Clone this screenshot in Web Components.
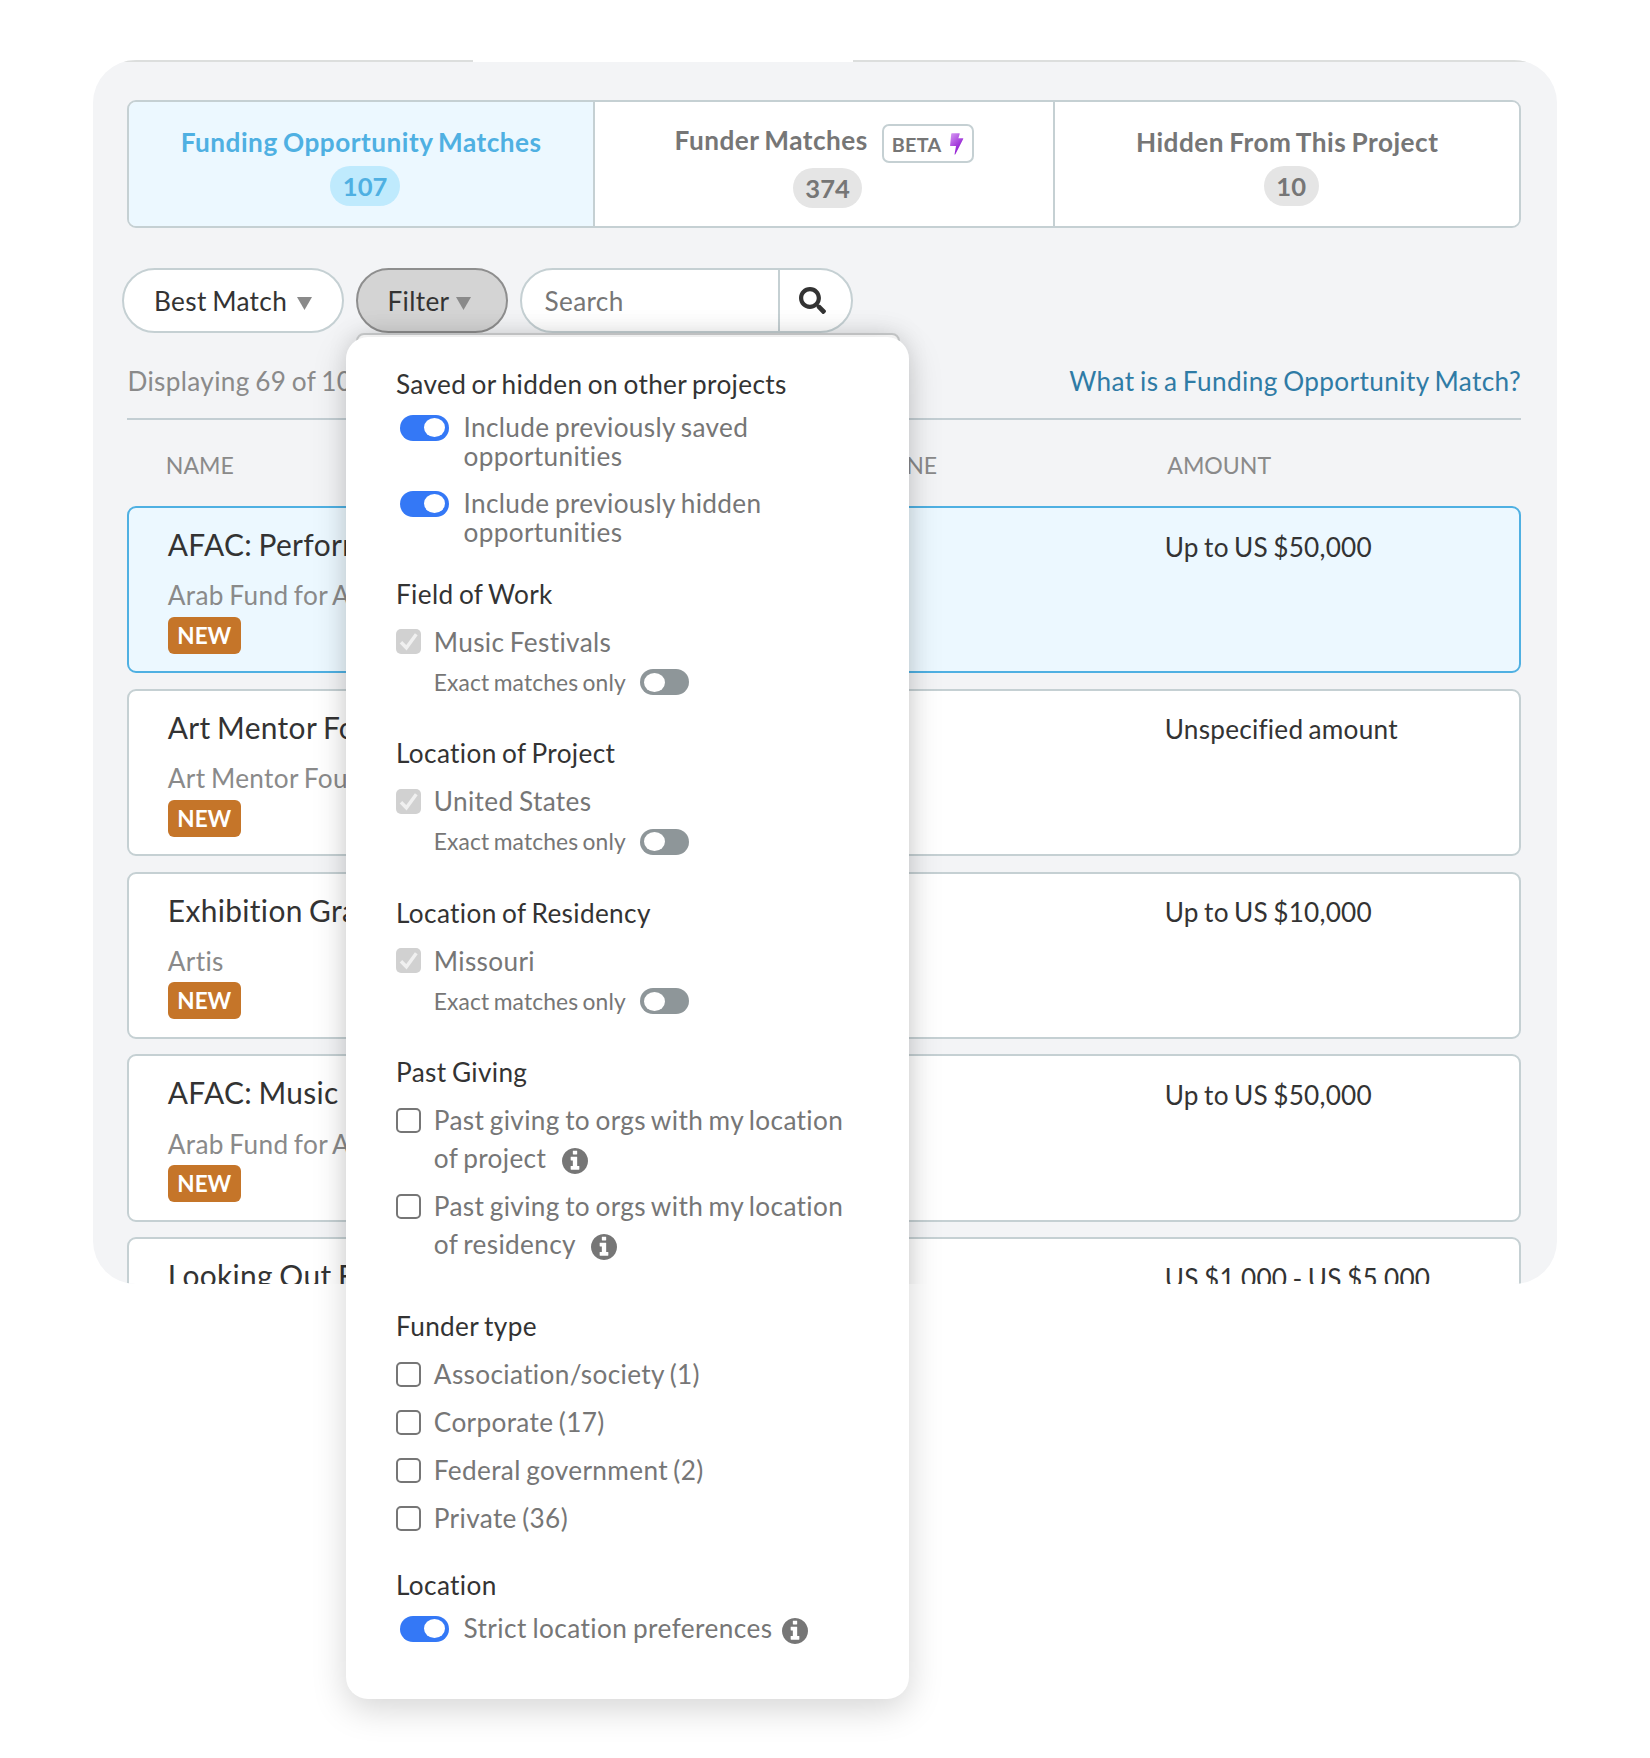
<!DOCTYPE html>
<html lang="en">
<head>
<meta charset="utf-8">
<title>Funding Opportunity Matches</title>
<style>
  body {
    margin: 0;
    background: #fff;
    color: #333;
    font: 26.2px/38px Lato, "Liberation Sans", sans-serif;
    font-variant-ligatures: none;
    letter-spacing: .35px;
    word-spacing: -1.6px;
  }
</style>
</head>
<body>
<matches-page></matches-page>

<script>
class BaseElement extends HTMLElement {
  constructor() {
    super();
    const shadow = this.attachShadow({mode: 'open'});
    shadow.innerHTML = this.template();
  }

  template() { return '<slot></slot>'; }
}

/* Small icons */
const icons = {
  search: ['0 0 512 512', '<path fill="currentColor" d="M505 442.7L405.3 343c-4.5-4.5-10.6-7-17-7H372c27.6-35.3 44-79.7 44-128C416 93.1 322.9 0 208 0S0 93.1 0 208s93.1 208 208 208c48.3 0 92.7-16.4 128-44v16.3c0 6.4 2.5 12.5 7 17l99.7 99.7c9.4 9.4 24.6 9.4 33.9 0l28.3-28.3c9.4-9.4 9.4-24.6.1-34zM208 336c-70.7 0-128-57.2-128-128 0-70.7 57.2-128 128-128 70.7 0 128 57.2 128 128 0 70.7-57.2 128-128 128z"/>'],
  info: ['0 128 1536 1536', '<path fill="currentColor" d="M1024 1376v-160q0-14-9-23t-23-9h-96v-512q0-14-9-23t-23-9h-320q-14 0-23 9t-9 23v160q0 14 9 23t23 9h96v320h-96q-14 0-23 9t-9 23v160q0 14 9 23t23 9h448q14 0 23-9t9-23zm-128-896v-160q0-14-9-23t-23-9h-192q-14 0-23 9t-9 23v160q0 14 9 23t23 9h192q14 0 23-9t9-23zm640 416q0 209-103 385.5t-279.5 279.5-385.5 103-385.5-103-279.5-279.5-103-385.5 103-385.5 279.5-279.5 385.5-103 385.5 103 279.5 279.5 103 385.5z"/>'],
  bolt: ['0 0 14 22', '<defs><linearGradient id="g" x1="0" y1="0" x2="0.6" y2="1"><stop offset="0.1" stop-color="#cf8cf0"/><stop offset="0.75" stop-color="#9a2bd6"/></linearGradient></defs><path fill="url(#g)" d="M2 .2h7.3q.6 0 .4.7L8.4 5.2h4.3q.9 0 .5.8L5.4 21.2q-.9 1-.8-.2L6 13H.7Q0 13 .1 12.2L1.2.9Q1.3.2 2 .2z"/>'],
  caret: ['0 0 15 13', '<path fill="#8a8a8a" d="M0 0h15L7.5 13z"/>'],
  check: ['0 0 25 25', '<path fill="none" stroke="#f0f0f0" stroke-width="3.4" d="M5 13.2l5.4 5.6L20.3 5.2"/>']
};

class FundIcon extends HTMLElement {
  constructor() {
    super();
    this.attachShadow({mode: 'open'});
  }

  connectedCallback() {
    const [ box, body ] = icons[this.getAttribute('name')];
    this.shadowRoot.innerHTML = `
      <style>
        :host { display: inline-block; flex: none; line-height: 0; }
        svg { display: block; width: 100%; height: 100%; }
      </style>
      <svg viewBox="${box}">${body}</svg>`;
  }
}
customElements.define('fund-icon', FundIcon);

class MatchTab extends BaseElement {
  template() {
    return `
      <style>
        :host {
          display: flex;
          flex-direction: column;
          align-items: center;
          box-sizing: border-box;
          padding-top: 20px;
          background: #fff;
          border-right: 2px solid #c5d0d3;
          color: #767676;
          font-weight: 700;
          letter-spacing: .5px;
        }
        :host(:last-of-type) { border-right: 0; }
        :host([active]) { background: #ecf8ff; color: #4fb0e2; }
        :host([beta]) { padding-top: 18px; }
        .label { display: flex; height: 40px; line-height: 41px; white-space: nowrap; }
        .count {
          margin: 4px 0 0 8px;
          padding: 0 12.5px;
          height: 40px;
          line-height: 40px;
          border-radius: 20px;
          background: #e5e5e5;
          font-size: 25.6px;
          letter-spacing: 0;
        }
        :host([beta]) .count { margin-top: 7.5px; margin-left: 7px; }
        :host([active]) .count { background: #bfeafd; }
      </style>
      <div class="label"><slot></slot></div>
      <div class="count"><slot name="count"></slot></div>`;
  }
}
customElements.define('match-tab', MatchTab);

class BetaTag extends BaseElement {
  template() {
    return `
      <style>
        :host {
          display: inline-flex;
          align-items: center;
          box-sizing: border-box;
          width: 92px;
          height: 39px;
          margin: 4px 0 0 14px;
          padding: 0 7.5px 0 8px;
          border: 2px solid #c5d0d3;
          border-radius: 7px;
          font-size: 19.8px;
          letter-spacing: .3px;
          line-height: 34px;
        }
        fund-icon { width: 14px; height: 22px; margin-left: auto; }
      </style>
      <slot></slot><fund-icon name="bolt"></fund-icon>`;
  }
}
customElements.define('beta-tag', BetaTag);

class PillButton extends BaseElement {
  template() {
    return `
      <style>
        :host {
          display: flex;
          align-items: center;
          box-sizing: border-box;
          height: 65px;
          padding-left: 30px;
          border: 2px solid #c5d0d3;
          border-radius: 33px;
          background: #fff;
          white-space: nowrap;
        }
        :host([pressed]) { background: #d4d4d4; border-color: #8e8e8e; }
        fund-icon { width: 15px; height: 13px; margin: 6px 0 0 9.5px; }
        :host([pressed]) fund-icon { margin-left: 6.5px; }
      </style>
      <slot></slot><fund-icon name="caret"></fund-icon>`;
  }
}
customElements.define('pill-button', PillButton);

class SearchBox extends BaseElement {
  template() {
    return `
      <style>
        :host {
          display: flex;
          box-sizing: border-box;
          height: 65px;
          border: 2px solid #c5d0d3;
          border-radius: 33px;
          background: #fff;
          color: #767676;
          line-height: 62.5px;
        }
        .field { width: 258px; box-sizing: border-box; padding-left: 23px; border-right: 2px solid #c5d0d3; }
        .go { flex: 1; color: #333; padding: 17px 0 0 19px; }
        fund-icon { width: 27px; height: 27px; display: block; }
      </style>
      <div class="field"><slot></slot></div>
      <div class="go"><fund-icon name="search"></fund-icon></div>`;
  }
}
customElements.define('search-box', SearchBox);

class MatchRow extends BaseElement {
  template() {
    return `
      <style>
        :host {
          display: grid;
          grid-template-columns: 655px 342px 1fr;
          box-sizing: border-box;
          height: 167.3px;
          margin-bottom: 15.5px;
          padding: 17px 0 0 38.4px;
          border: 2px solid #c5d0d3;
          border-radius: 9px;
          background: #fff;
          white-space: nowrap;
        }
        :host([active]) { background: #ecf8ff; border-color: #4fb0e2; }
        .title { font-size: 29.9px; line-height: 38px; }
        .org { color: #8a8a8a; margin-top: 15.4px; line-height: 34px; }
        .new {
          width: 73px;
          height: 37px;
          margin-top: 4.4px;
          border-radius: 6px;
          background: #c57529;
          color: #fff;
          font-size: 22.5px;
          font-weight: 700;
          letter-spacing: 0;
          line-height: 37px;
          text-align: center;
        }
        :host([seen]) .new { display: none; }
        .amount { padding-top: 2.6px; letter-spacing: .22px; }
      </style>
      <div>
        <div class="title"><slot name="title"></slot></div>
        <div class="org"><slot name="org"></slot></div>
        <div class="new">NEW</div>
      </div>
      <div></div>
      <div class="amount"><slot name="amount"></slot></div>`;
  }
}
customElements.define('match-row', MatchRow);

class ToggleSwitch extends BaseElement {
  template() {
    return `
      <style>
        :host {
          display: flex;
          flex: none;
          align-items: center;
          box-sizing: border-box;
          width: 49px;
          height: 26px;
          padding: 0 4px;
          border-radius: 13px;
          background: #8e9699;
        }
        :host([on]) { background: #3478f6; justify-content: flex-end; }
        i { width: 21px; height: 19px; border-radius: 50%; background: #fff; }
      </style>
      <i></i>`;
  }
}
customElements.define('toggle-switch', ToggleSwitch);

class ToggleRow extends BaseElement {
  template() {
    return `
      <style>
        :host { display: flex; padding-left: 4.4px; line-height: 29px; color: #767676; }
        :host(:not(:first-of-type)) { margin-top: 8px; }
        toggle-switch { margin: 2px 14.1px 0 0; }
      </style>
      <toggle-switch on></toggle-switch><div><slot></slot></div>`;
  }
}
customElements.define('toggle-row', ToggleRow);

class CheckRow extends BaseElement {
  template() {
    return `
      <style>
        :host { display: flex; color: #767676; }
        .box {
          flex: none;
          box-sizing: border-box;
          width: 25px;
          height: 25px;
          margin: 6.6px 12.8px 0 0;
          border: 2px solid #767676;
          border-radius: 5px;
        }
        fund-icon { display: none; width: 25px; height: 25px; }
        :host([locked]) .box { border: 0; background: #d1d1d1; }
        :host([locked]) fund-icon { display: block; }
      </style>
      <div class="box"><fund-icon name="check"></fund-icon></div>
      <div><slot></slot></div>`;
  }
}
customElements.define('check-row', CheckRow);

class ExactRow extends BaseElement {
  template() {
    return `
      <style>
        :host {
          display: flex;
          margin-top: -8px;
          padding-left: 37.8px;
          color: #767676;
          font-size: 22.8px;
          letter-spacing: .13px;
        }
        toggle-switch { margin: 6.6px 0 0 14.6px; }
      </style>
      Exact matches only<toggle-switch></toggle-switch>`;
  }
}
customElements.define('exact-row', ExactRow);

class FilterGroup extends BaseElement {
  static get observedAttributes() { return [ 'heading' ]; }

  template() {
    return `
      <style>
        :host { display: flex; flex-direction: column; gap: 10px; }
        .heading { height: 38px; white-space: nowrap; }
      </style>
      <div class="heading"></div>
      <slot></slot>`;
  }

  attributeChangedCallback(name, oldValue, newValue) {
    this.shadowRoot.querySelector('.heading').textContent = newValue;
  }
}
customElements.define('filter-group', FilterGroup);

class FilterMenu extends BaseElement {
  template() {
    return `
      <style>
        :host {
          display: block;
          box-sizing: border-box;
          width: 563px;
          height: 1362px;
          padding: 27.5px 50px 0;
          border-radius: 22px;
          background: #fff;
          box-shadow: 0 10px 34px rgba(0, 0, 0, .17);
        }
        .s { margin-top: 28px; }
        .m { margin-top: 33.6px; }
        .l { margin-top: 43.9px; }
        .last { margin-top: 28.7px; }
        filter-group fund-icon { width: 26px; height: 26px; margin-left: 10px; vertical-align: -6px; }
      </style>
      <filter-group heading="Saved or hidden on other projects">
        <toggle-row>Include previously saved<br>opportunities</toggle-row>
        <toggle-row>Include previously hidden<br>opportunities</toggle-row>
      </filter-group>
      <filter-group class="s" heading="Field of Work">
        <check-row locked>Music Festivals</check-row>
        <exact-row></exact-row>
      </filter-group>
      <filter-group class="m" heading="Location of Project">
        <check-row locked>United States</check-row>
        <exact-row></exact-row>
      </filter-group>
      <filter-group class="m" heading="Location of Residency">
        <check-row locked>Missouri</check-row>
        <exact-row></exact-row>
      </filter-group>
      <filter-group class="m" heading="Past Giving">
        <check-row>Past giving to orgs with my location<br>of project <fund-icon name="info"></fund-icon></check-row>
        <check-row>Past giving to orgs with my location<br>of residency <fund-icon name="info"></fund-icon></check-row>
      </filter-group>
      <filter-group class="l" heading="Funder type">
        <check-row>Association/society (1)</check-row>
        <check-row>Corporate (17)</check-row>
        <check-row>Federal government (2)</check-row>
        <check-row>Private (36)</check-row>
      </filter-group>
      <filter-group class="last" heading="Location">
        <toggle-row style="letter-spacing:.44px">Strict location preferences <fund-icon name="info" style="margin-left:4px"></fund-icon></toggle-row>
      </filter-group>`;
  }
}
customElements.define('filter-menu', FilterMenu);

class MatchesPage extends BaseElement {
  template() {
    return `
      <style>
        :host {
          display: block;
          position: relative;
          box-sizing: border-box;
          height: 1758px;
          padding: 60px 93px 0;
          overflow: hidden;
        }
        .panel {
          position: relative;
          box-sizing: border-box;
          height: 1224px;
          padding: 0 36px 0 34.4px;
          border-radius: 43px;
          background: #f3f4f6;
          overflow: hidden;
        }
        /* top rule, broken where the project header sits */
        .rule {
          height: 2px;
          margin: 0 -36px 38px -34.4px;
          background: linear-gradient(90deg, #dcdedd 380px, #fff 380px 760px, #dcdedd 760px);
        }
        .tabs {
          display: grid;
          grid-template-columns: 465.5px 460.5px 1fr;
          height: 124px;
          border: 2px solid #c5d0d3;
          border-radius: 9px;
          overflow: hidden;
        }
        .tools { display: flex; gap: 11.5px; margin: 40px 0 0 -5.4px; }
        .summary {
          display: flex;
          justify-content: space-between;
          height: 56.5px;
          margin-top: 28.5px;
          border-bottom: 2px solid #c3ced3;
          color: #8a8a8a;
        }
        a { color: #2f7ba5; letter-spacing: .38px; }
        .head {
          display: grid;
          grid-template-columns: 658px 343.5px 1fr;
          height: 51px;
          padding: 35px 0 0 38.4px;
          line-height: 20px;
          color: #8a8a8a;
          font-size: 23.1px;
          letter-spacing: 0;
        }
        /* sheet that drops out of the Filter pill */
        .sheet {
          position: absolute;
          top: 273px;
          left: 263px;
          box-sizing: border-box;
          width: 544px;
          height: 1400px;
          border: 2px solid #c6c8c9;
          border-radius: 8px;
          background: #f9f9f9;
          box-shadow: 0 4px 28px rgba(0, 0, 0, .17);
        }
        filter-menu { position: absolute; top: 337px; left: 346px; }
      </style>
      <div class="panel">
        <div class="rule"></div>
        <div class="tabs">
          <match-tab active>Funding Opportunity Matches<span slot="count">107</span></match-tab>
          <match-tab beta>Funder Matches<beta-tag>BETA</beta-tag><span slot="count">374</span></match-tab>
          <match-tab>Hidden From This Project<span slot="count">10</span></match-tab>
        </div>
        <div class="tools">
          <pill-button style="width:222px">Best Match</pill-button>
          <pill-button pressed style="width:152.5px">Filter</pill-button>
          <search-box style="width:333px">Search</search-box>
        </div>
        <div class="summary"><span>Displaying 69 of 107</span><a>What is a Funding Opportunity Match?</a></div>
        <div class="head"><span>NAME</span><span>DEADLINE</span><span>AMOUNT</span></div>
        <match-row active>
          <span slot="title">AFAC: Performing</span>
          <span slot="org">Arab Fund for Arts</span>
          <span slot="amount">Up to US $50,000</span>
        </match-row>
        <match-row>
          <span slot="title">Art Mentor Fo</span>
          <span slot="org">Art Mentor Found</span>
          <span slot="amount">Unspecified amount</span>
        </match-row>
        <match-row>
          <span slot="title">Exhibition Grants</span>
          <span slot="org">Artis</span>
          <span slot="amount">Up to US $10,000</span>
        </match-row>
        <match-row>
          <span slot="title">AFAC: Music</span>
          <span slot="org">Arab Fund for Arts</span>
          <span slot="amount">Up to US $50,000</span>
        </match-row>
        <match-row seen>
          <span slot="title">Looking Out F</span>
          <span slot="amount">US $1,000 - US $5,000</span>
        </match-row>
        <div class="sheet"></div>
      </div>
      <filter-menu></filter-menu>`;
  }
}
customElements.define('matches-page', MatchesPage);
</script>
</body>
</html>
